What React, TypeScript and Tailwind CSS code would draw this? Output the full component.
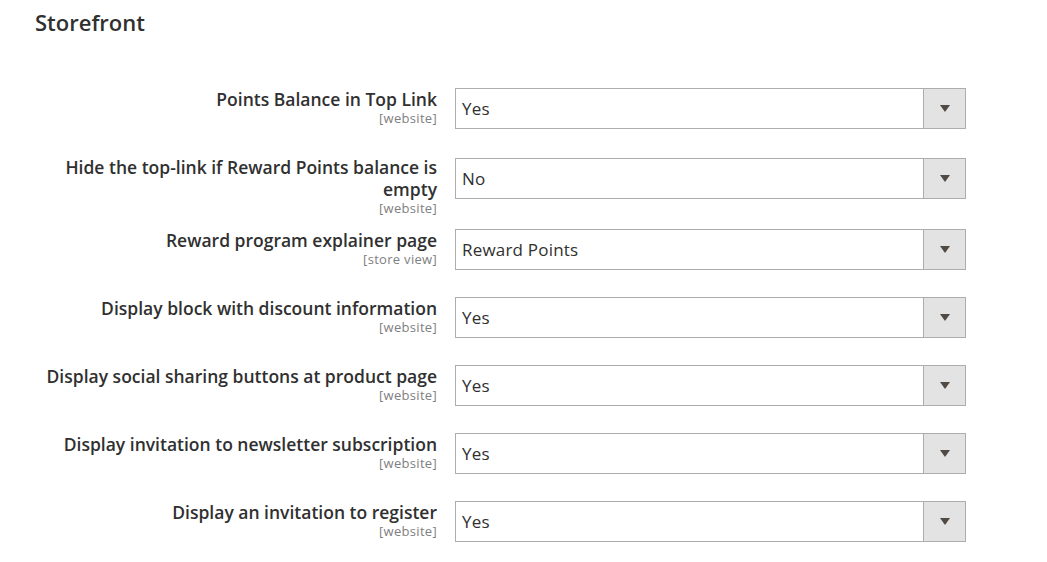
import React from "react";

const rows: { label: string; scope: string; value: string; h: string; off: string }[] = [
  { label: "Points Balance in Top Link", scope: "[website]", value: "Yes", h: "h-[70px]", off: "mt-0" },
  { label: "Hide the top-link if Reward Points balance is empty", scope: "[website]", value: "No", h: "h-[71px]", off: "-mt-[2px]" },
  { label: "Reward program explainer page", scope: "[store view]", value: "Reward Points", h: "h-[68px]", off: "mt-0" },
  { label: "Display block with discount information", scope: "[website]", value: "Yes", h: "h-[68px]", off: "mt-0" },
  { label: "Display social sharing buttons at product page", scope: "[website]", value: "Yes", h: "h-[68px]", off: "mt-0" },
  { label: "Display invitation to newsletter subscription", scope: "[website]", value: "Yes", h: "h-[68px]", off: "mt-0" },
  { label: "Display an invitation to register", scope: "[website]", value: "Yes", h: "h-[61px]", off: "mt-0" },
];

export default function App() {
  return (
    <div
      className="w-[1047px] h-[562px] bg-white overflow-hidden text-[#303030]"
      style={{ fontFamily: "'Open Sans', 'Noto Sans', sans-serif" }}
    >
      <div className="pl-[35px] pt-[7px] text-[22px] leading-[30px] font-semibold text-[#303030]">
        Storefront
      </div>
      <div className="mt-[51px] flex flex-col">
        {rows.map((r, i) => (
          <div key={i} className={`flex items-start ${r.h}`}>
            <div className={`ml-[37px] w-[400px] text-right ${r.off}`}>
              <div className="text-[17.5px] leading-[22px] font-semibold text-[#303030]">{r.label}</div>
              <div className="text-[13px] leading-[16px] tracking-[0.3px] text-[#808080]">{r.scope}</div>
            </div>
            <div className="ml-[18px] w-[511px] h-[41px] border border-[#adadad] bg-white flex items-stretch">
              <div className="flex-1 flex items-center pl-[6px] text-[17px] tracking-[0.2px] text-[#303030]">{r.value}</div>
              <div className="w-[42px] bg-[#e3e3e3] border-l border-[#adadad] flex items-center justify-center">
                <div className="w-0 h-0 border-l-[5px] border-r-[5px] border-t-[7px] border-l-transparent border-r-transparent border-t-[#514943]" />
              </div>
            </div>
          </div>
        ))}
      </div>
    </div>
  );
}
